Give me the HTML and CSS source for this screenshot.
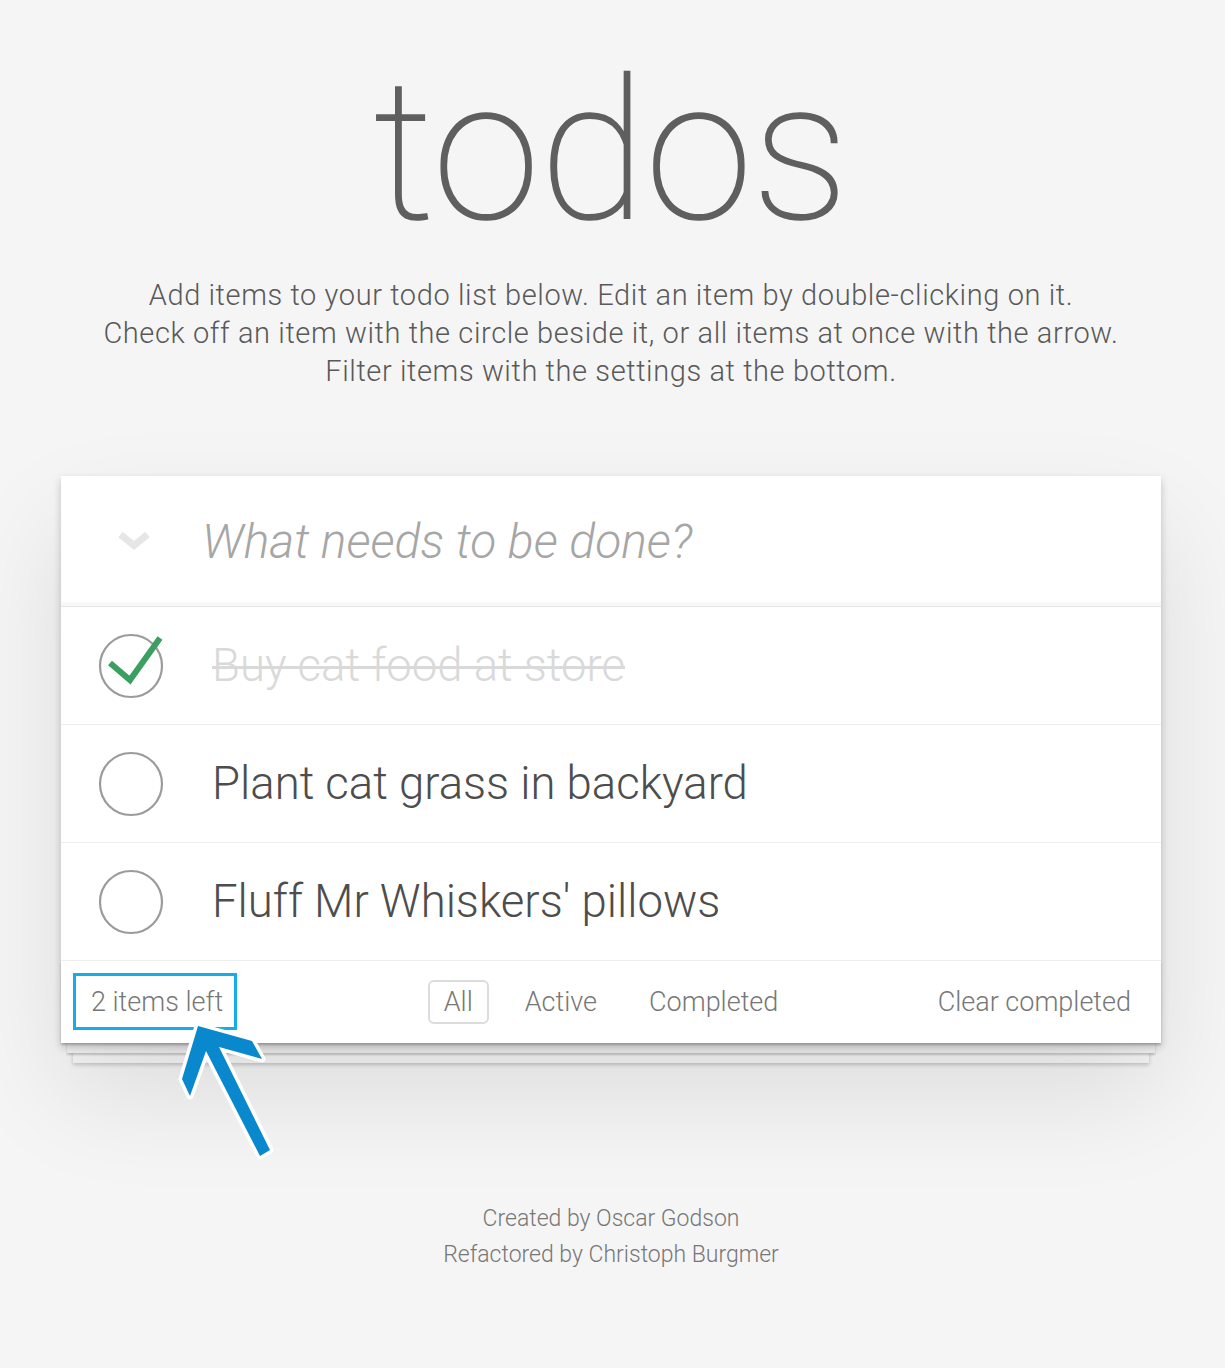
FILE: index.html
```html
<!DOCTYPE html>
<html lang="en">
<head>
<meta charset="utf-8">
<title>todos</title>
<link rel="stylesheet" href="styles.css">
</head>
<body>
<main class="page">
  <h1 class="title">todos</h1>
  <p class="intro">Add items to your todo list below. Edit an item by double-clicking on it.<br>Check off an item with the circle beside it, or all items at once with the arrow.<br>Filter items with the settings at the bottom.</p>

  <section class="todoapp">
    <header class="new-row">
      <svg class="toggle-all" width="32" height="20" viewBox="0 0 32 20"><path d="M2.5 2.5 L16 13.5 L29.5 2.5" fill="none" stroke="#e6e6e6" stroke-width="7"/></svg>
      <span class="placeholder">What needs to be done?</span>
    </header>
    <ul class="list">
      <li class="item done">
        <svg class="check" width="72" height="72" viewBox="0 0 72 72"><circle cx="36" cy="36" r="31" fill="none" stroke="#9b9b9b" stroke-width="2.2"/><path d="M15 33 L35 50 L65 8" fill="none" stroke="#3c9f62" stroke-width="6"/></svg>
        <span class="label">Buy cat food at store</span>
      </li>
      <li class="item">
        <svg class="check" width="72" height="72" viewBox="0 0 72 72"><circle cx="36" cy="36" r="31" fill="none" stroke="#9b9b9b" stroke-width="2.2"/></svg>
        <span class="label">Plant cat grass in backyard</span>
      </li>
      <li class="item">
        <svg class="check" width="72" height="72" viewBox="0 0 72 72"><circle cx="36" cy="36" r="31" fill="none" stroke="#9b9b9b" stroke-width="2.2"/></svg>
        <span class="label">Fluff Mr Whiskers' pillows</span>
      </li>
    </ul>
    <footer class="footer">
      <span class="count">2 items left</span>
      <nav class="filters">
        <a class="filter selected">All</a>
        <a class="filter">Active</a>
        <a class="filter">Completed</a>
      </nav>
      <a class="clear">Clear completed</a>
      <span class="highlight"></span>
      <svg class="arrow" width="120" height="160" viewBox="170 1010 120 160"><polygon points="198,1025 252,1040 262,1058 219,1046 270,1149 260,1155 206,1050 190,1095 182,1078" fill="#0a88cd" stroke="#ffffff" stroke-width="7" stroke-linejoin="round" paint-order="stroke"/></svg>
    </footer>
  </section>

  <footer class="info">
    <p>Created by Oscar Godson</p>
    <p>Refactored by Christoph Burgmer</p>
  </footer>
</main>
</body>
</html>
```

FILE: styles.css
```css
* { box-sizing: border-box; }

html, body {
  margin: 0;
  padding: 0;
}

body {
  background: #f5f5f5;
  font-family: Roboto, "Helvetica Neue", Arial, sans-serif;
  font-weight: 300;
  color: #4d4d4d;
  padding-right: 3px;
}

.page {
  width: 1100px;
  margin: 0 auto;
  padding-top: 55px;
  padding-bottom: 80px;
}

.title {
  margin: 0;
  font-size: 194px;
  line-height: 194px;
  font-weight: 100;
  color: #5f5f5f;
  -webkit-text-stroke: 1.6px #5f5f5f;
  text-align: center;
}

.intro {
  margin: 27px -80px 0;
  font-size: 29px;
  line-height: 38px;
  letter-spacing: 0.6px;
  color: #595959;
  text-align: center;
}

.todoapp {
  position: relative;
  margin-top: 86px;
  background: #fff;
  box-shadow: 0 4px 8px rgba(0, 0, 0, 0.2), 0 50px 100px rgba(0, 0, 0, 0.1);
}

.new-row {
  display: flex;
  align-items: center;
  height: 131px;
  border-bottom: 1px solid #e6e6e6;
  box-shadow: inset 0 -4px 2px rgba(0, 0, 0, 0.03);
}

.toggle-all {
  margin-left: 57px;
  margin-top: 2px;
  flex: none;
}

.placeholder {
  margin-left: 52px;
  font-size: 48px;
  font-style: italic;
  color: #a6a6a6;
}

.list {
  list-style: none;
  margin: 0;
  padding: 0;
}

.item {
  display: flex;
  align-items: center;
  height: 118px;
  padding-left: 34px;
  border-bottom: 1px solid #ededed;
}

.check { flex: none; }

.label {
  margin-left: 45px;
  font-size: 45.5px;
  color: #4d4d4d;
}

.done .label {
  color: #d9d9d9;
  text-decoration: line-through;
  text-decoration-thickness: 3px;
}

.footer {
  position: relative;
  display: grid;
  grid-template-columns: 1fr auto 1fr;
  align-items: center;
  height: 82px;
  padding: 0 30px;
  font-size: 27px;
  color: #777;
}

.footer::before {
  content: "";
  position: absolute;
  left: 0;
  right: 0;
  bottom: 0;
  height: 100%;
  z-index: -1;
  box-shadow: 0 2px 2px rgba(0, 0, 0, 0.2),
    0 16px 0 -6px #f6f6f6,
    0 18px 2px -6px rgba(0, 0, 0, 0.2),
    0 32px 0 -12px #f6f6f6,
    0 34px 4px -12px rgba(0, 0, 0, 0.2);
}

.count { justify-self: start; }

.filters {
  display: flex;
  gap: 20px;
}

.filter {
  padding: 4px 14px;
  border: 2px solid transparent;
  border-radius: 6px;
  color: #777;
}

.filter.selected { border-color: #dcdcdc; }

.clear { justify-self: end; color: #777; }

.highlight {
  position: absolute;
  left: 12px;
  top: 12px;
  width: 164px;
  height: 57px;
  border: 3px solid #14ade6;
}

.arrow {
  position: absolute;
  left: 109px;
  top: 50px;
}

.info {
  margin-top: 158px;
  text-align: center;
  font-size: 23px;
  line-height: 36px;
  color: #777;
}

.info p { margin: 0; }
```
